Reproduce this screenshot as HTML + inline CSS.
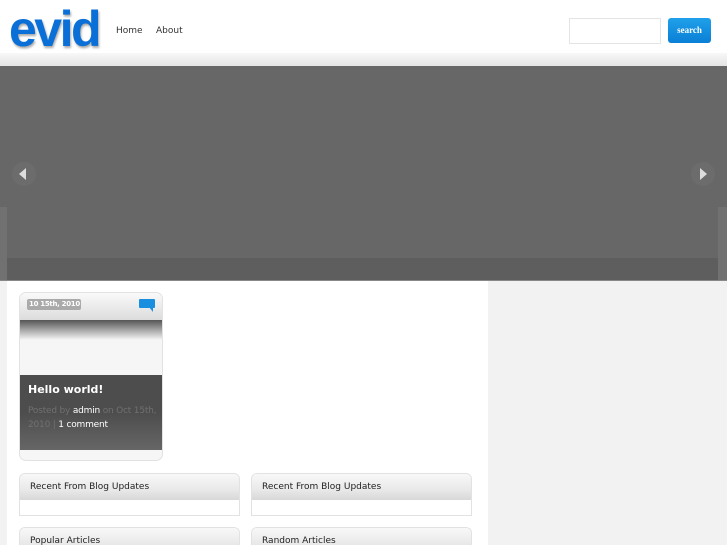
<!DOCTYPE html>
<html><head><style>
*{margin:0;padding:0;box-sizing:border-box}
html,body{width:727px;height:545px;overflow:hidden}
body{background:#f2f2f2;font-family:"DejaVu Sans","Liberation Sans",sans-serif;position:relative}
.a{position:absolute}
.w{border:1px solid #e2e2e2;border-radius:6px 6px 0 0;background:#fff;overflow:hidden}
.w .h{height:26px;background:linear-gradient(#f8f8f8,#e9e9e9 60%,#d8d8d8);font-size:9px;color:#222;padding:8px 0 0 10px}
</style></head><body>
<div class="a" style="left:0;top:0;width:727px;height:53px;background:#fff"></div>
<div class="a" style="left:0;top:53px;width:727px;height:13px;background:linear-gradient(#f8f8f8,#e4e4e4)"></div>
<div class="a" style="left:9px;top:3px;font:bold 50px 'Liberation Sans',sans-serif;letter-spacing:-2.5px;color:#0a6fd6;line-height:52px;text-shadow:1px 2px 2px #aaa">evid</div>
<div class="a" style="left:116px;top:26px;font-size:9px;color:#333">Home</div>
<div class="a" style="left:156px;top:26px;font-size:9px;color:#333">About</div>
<div class="a" style="left:569px;top:18px;width:92px;height:26px;border:1px solid #e4e4e4;background:#fff"></div>
<div class="a" style="left:668px;top:18px;width:43px;height:25px;border-radius:3px;background:linear-gradient(#1fa0ea,#0a7fd6);color:#fff;font:bold 9px 'Liberation Serif',serif;text-align:center;line-height:25px">search</div>
<div class="a" style="left:0;top:66px;width:727px;height:214px;background:#676767"></div>
<div class="a" style="left:0;top:207px;width:7px;height:73px;background:#717171"></div>
<div class="a" style="left:718px;top:207px;width:9px;height:73px;background:#717171"></div>
<div class="a" style="left:7px;top:258px;width:711px;height:22px;background:#5e5e5e"></div>
<div class="a" style="left:12px;top:162px;width:24px;height:24px;border-radius:50%;background:#6c6c6c"></div>
<div class="a" style="left:19px;top:168px;width:0;height:0;border-top:6px solid transparent;border-bottom:6px solid transparent;border-right:7px solid #ddd"></div>
<div class="a" style="left:691px;top:162px;width:24px;height:24px;border-radius:50%;background:#6c6c6c"></div>
<div class="a" style="left:700px;top:168px;width:0;height:0;border-top:6px solid transparent;border-bottom:6px solid transparent;border-left:7px solid #ddd"></div>
<div class="a" style="left:0;top:280px;width:727px;height:1px;background:#888"></div>
<div class="a" style="left:7px;top:281px;width:481px;height:264px;background:#fff"></div>
<div class="a" style="left:19px;top:292px;width:144px;height:169px;border:1px solid #e2e2e2;border-radius:7px;background:#f6f6f6;overflow:hidden">
 <div style="height:27px;background:linear-gradient(#fafafa,#dcdcdc)"></div>
 <div style="height:20px;background:linear-gradient(#555,#f6f6f6)"></div>
 <div style="height:35px"></div>
 <div style="height:75px;background:linear-gradient(#4d4d4d 50%,#666)"></div>
</div>
<div class="a" style="left:27px;top:299px;width:54px;height:11px;background:#aaa;border-radius:2px;font:bold 7px 'DejaVu Sans',sans-serif;color:#fff;line-height:11px;padding-left:2px;white-space:nowrap;letter-spacing:-0.3px;overflow:hidden">10 15th, 2010</div>
<div class="a" style="left:139px;top:299px;width:16px;height:9px;background:#1a8fe0;border-radius:1px"></div>
<div class="a" style="left:149px;top:307px;width:0;height:0;border-top:5px solid #1a8fe0;border-left:4px solid transparent"></div>
<div class="a" style="left:28px;top:383px;font:bold 11px 'DejaVu Sans',sans-serif;color:#fff">Hello world!</div>
<div class="a" style="left:28px;top:404px;width:134px;font-size:9px;line-height:14px;color:#707070;letter-spacing:-0.2px">Posted by <span style="color:#fff">admin</span> on Oct 15th, 2010 | <span style="color:#fff">1 comment</span></div>
<div class="a w" style="left:19px;top:473px;width:221px;height:43px"><div class="h">Recent From Blog Updates</div></div>
<div class="a w" style="left:251px;top:473px;width:221px;height:43px"><div class="h">Recent From Blog Updates</div></div>
<div class="a w" style="left:19px;top:527px;width:221px;height:18px;border-bottom:0"><div class="h">Popular Articles</div></div>
<div class="a w" style="left:251px;top:527px;width:221px;height:18px;border-bottom:0"><div class="h">Random Articles</div></div>
</body></html>
